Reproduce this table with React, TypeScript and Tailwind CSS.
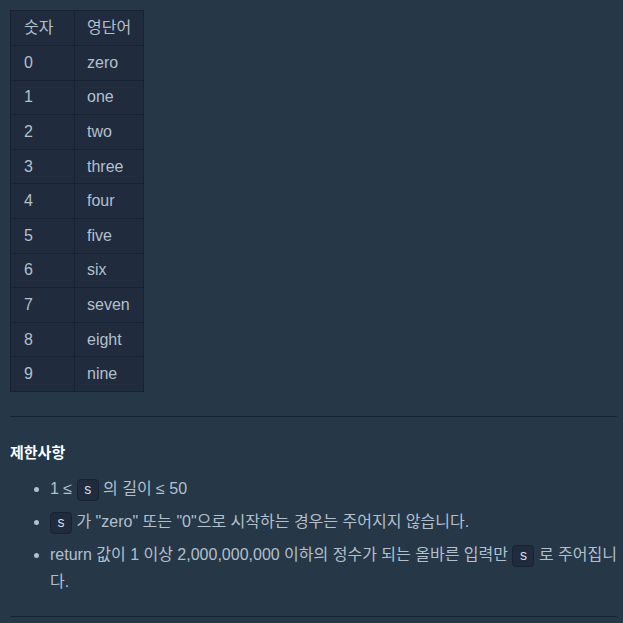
import React from "react"

const rows = [
  ["0", "zero"],
  ["1", "one"],
  ["2", "two"],
  ["3", "three"],
  ["4", "four"],
  ["5", "five"],
  ["6", "six"],
  ["7", "seven"],
  ["8", "eight"],
  ["9", "nine"],
]

function Code({ children }: { children: React.ReactNode }) {
  return (
    <code className="inline-flex h-[22px] w-[22px] items-center justify-center rounded-[4px] border border-[#172334] bg-[#202b3d] align-middle font-['Liberation_Mono',monospace] text-[14px] leading-none text-[#d5dde4]">
      {children}
    </code>
  )
}

export default function App() {
  return (
    <div className="min-h-[623px] bg-[#263747] pl-[10px] pr-[6px] pt-[10px] font-['Liberation_Sans','Noto_Sans_CJK_KR',sans-serif] text-[16px] text-[#b2c0cc]">
      <table className="border-collapse bg-[#202b3d]">
        <thead>
          <tr className="h-[35px]">
            <th className="w-[64px] border border-[#172334] pl-[13px] text-left font-normal">숫자</th>
            <th className="w-[69px] border border-[#172334] pl-[12px] text-left font-normal">영단어</th>
          </tr>
        </thead>
        <tbody>
          {rows.map(([n, w]) => (
            <tr key={n} className="h-[34.6px]">
              <td className="border border-[#172334] pl-[13px]">{n}</td>
              <td className="border border-[#172334] pl-[12px]">{w}</td>
            </tr>
          ))}
        </tbody>
      </table>

      <hr className="mt-[24px] border-t border-[#172334]" />

      <h5 className="mt-[25px] text-[15px] font-bold leading-[22px] text-white">제한사항</h5>

      <ul className="mt-[11px] list-disc pl-[40px] leading-[27px] marker:text-[#b2c0cc]">
        <li>
          1 ≤ <Code>s</Code> 의 길이 ≤ 50
        </li>
        <li className="mt-[6px]">
          <Code>s</Code> 가 "zero" 또는 "0"으로 시작하는 경우는 주어지지 않습니다.
        </li>
        <li className="mt-[6px]">
          return 값이 1 이상 2,000,000,000 이하의 정수가 되는 올바른 입력만 <Code>s</Code> 로 주어집니다.
        </li>
      </ul>

      <hr className="mt-[21px] border-t border-[#172334]" />
    </div>
  )
}
